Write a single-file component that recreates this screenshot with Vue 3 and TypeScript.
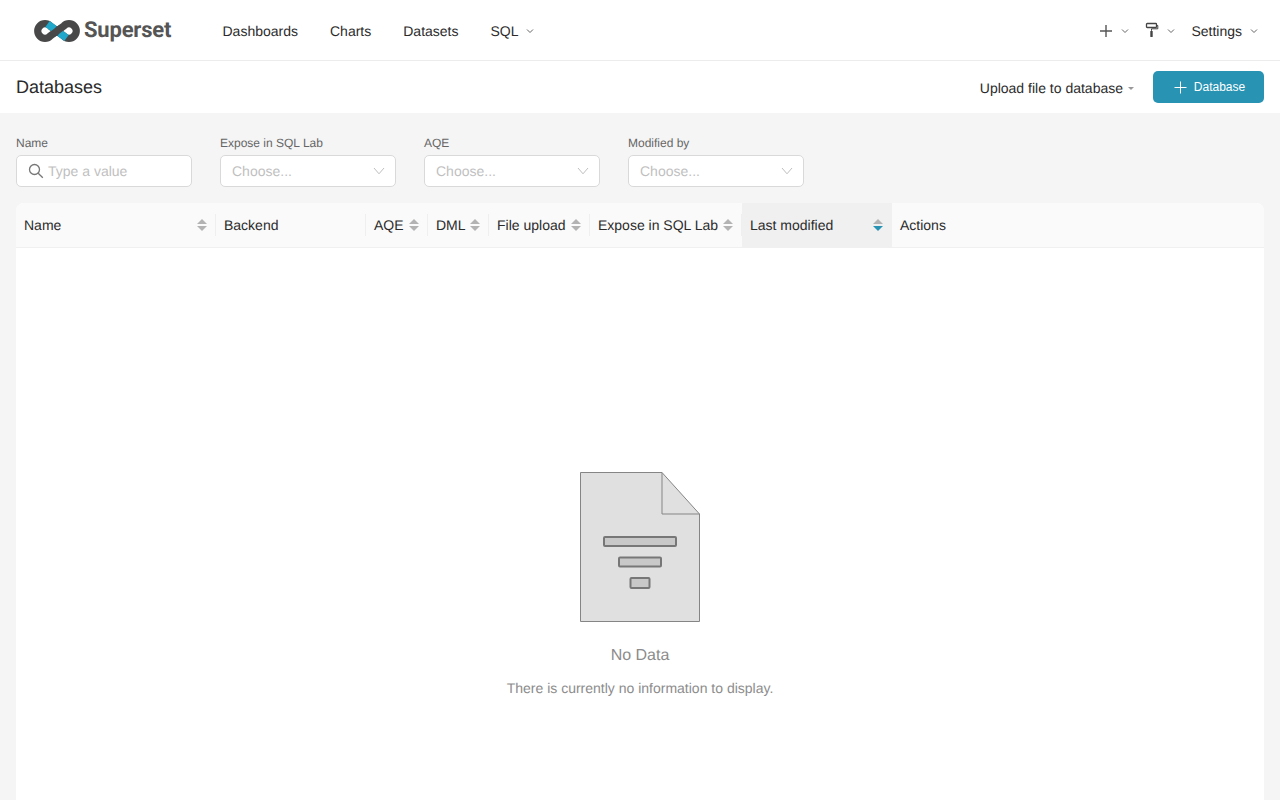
<script setup lang="ts">
const navItems = [
  { label: "Dashboards", caret: false },
  { label: "Charts", caret: false },
  { label: "Datasets", caret: false },
  { label: "SQL", caret: true },
];

const filters = [
  { label: "Name", placeholder: "Type a value", search: true },
  { label: "Expose in SQL Lab", placeholder: "Choose...", search: false },
  { label: "AQE", placeholder: "Choose...", search: false },
  { label: "Modified by", placeholder: "Choose...", search: false },
];

const columns = [
  { label: "Name", sortable: true, active: false },
  { label: "Backend", sortable: false, active: false },
  { label: "AQE", sortable: true, active: false },
  { label: "DML", sortable: true, active: false },
  { label: "File upload", sortable: true, active: false },
  { label: "Expose in SQL Lab", sortable: true, active: false },
  { label: "Last modified", sortable: true, active: true },
  { label: "Actions", sortable: false, active: false },
];
</script>

<template>
  <div class="page">
    <header class="nav">
      <a class="logo">
        <svg width="50" height="24" viewBox="0 0 50 24">
          <path
            d="M18.100 6.900A7.200 7.200 0 1 0 18.100 17.100L31.900 6.900A7.200 7.200 0 1 1 31.900 17.100L18.100 6.900"
            fill="none"
            stroke="#484848"
            stroke-width="7.400"
          />
          <path d="M15.500 5L22.500 10.100M27.500 13.900L34.500 19" stroke="#20a7c9" stroke-width="7.400" fill="none" />
          <path d="M20.500 15.300L29.500 8.700" stroke="#484848" stroke-width="7" fill="none" />
        </svg>
        <span class="logo-text">Superset</span>
      </a>
      <nav class="menu">
        <span v-for="item in navItems" :key="item.label" class="menu-item">
          {{ item.label }}
          <svg v-if="item.caret" class="chev" width="8" height="6" viewBox="0 0 8 6">
            <path d="M1 1.500l3 3 3-3" fill="none" stroke="#666" stroke-width="1" />
          </svg>
        </span>
      </nav>
      <div class="nav-right">
        <span class="nav-icon">
          <svg width="14" height="14" viewBox="0 0 14 14">
            <path d="M7 1v12M1 7h12" stroke="#555" stroke-width="1.400" fill="none" />
          </svg>
          <svg class="chev" width="8" height="6" viewBox="0 0 8 6">
            <path d="M1 1.500l3 3 3-3" fill="none" stroke="#666" stroke-width="1" />
          </svg>
        </span>
        <span class="nav-icon">
          <svg class="roller" width="14" height="16" viewBox="0 0 14 16">
            <rect x="1.500" y="1.500" width="10" height="4" rx="0.800" fill="none" stroke="#444" stroke-width="1.300" />
            <path d="M11.500 3.500h1.300v3.300H6.500v2" fill="none" stroke="#444" stroke-width="1" />
            <rect x="5.300" y="9" width="2.400" height="6" rx="0.600" fill="#444" />
          </svg>
          <svg class="chev" width="8" height="6" viewBox="0 0 8 6">
            <path d="M1 1.500l3 3 3-3" fill="none" stroke="#666" stroke-width="1" />
          </svg>
        </span>
        <span class="settings">
          Settings
          <svg class="chev" width="8" height="6" viewBox="0 0 8 6">
            <path d="M1 1.500l3 3 3-3" fill="none" stroke="#666" stroke-width="1" />
          </svg>
        </span>
      </div>
    </header>

    <section class="subheader">
      <h1 class="title">Databases</h1>
      <div class="actions">
        <span class="upload">
          Upload file to database
          <span class="upload-caret"></span>
        </span>
        <button class="primary">
          <svg width="13" height="13" viewBox="0 0 13 13">
            <path d="M6.500 0.500v12M0.500 6.500h12" stroke="#fff" stroke-width="1" fill="none" />
          </svg>
          Database
        </button>
      </div>
    </section>

    <main class="content">
      <div class="filters">
        <div v-for="f in filters" :key="f.label" class="filter">
          <label class="filter-label">{{ f.label }}</label>
          <div class="input">
            <svg v-if="f.search" class="search" width="16" height="16" viewBox="0 0 16 16">
              <circle cx="6.500" cy="6.500" r="5" fill="none" stroke="#777" stroke-width="1.300" />
              <path d="M10.200 10.200l4.600 4.600" stroke="#777" stroke-width="1.300" fill="none" />
            </svg>
            <span class="placeholder">{{ f.placeholder }}</span>
            <svg v-if="!f.search" class="select-arrow" width="12" height="8" viewBox="0 0 12 8">
              <path d="M1 1l5 5.800L11 1" fill="none" stroke="#bfbfbf" stroke-width="1" />
            </svg>
          </div>
        </div>
      </div>

      <div class="table">
        <div class="thead">
          <div v-for="c in columns" :key="c.label" class="th" :class="{ active: c.active }">
            <span>{{ c.label }}</span>
            <span v-if="c.sortable" class="sorter">
              <i class="up"></i>
              <i class="down" :class="{ on: c.active }"></i>
            </span>
          </div>
        </div>
        <div class="tbody">
          <svg width="120" height="150" viewBox="0 0 120 150">
            <path d="M0.500 0.500H82L119.500 42V149.500H0.500z" fill="#e0e0e0" stroke="#858585" />
            <path d="M82 0.500V42H119.500" fill="none" stroke="#858585" />
            <rect x="24" y="65" width="72" height="9" rx="1" fill="#c8c8c8" stroke="#777" stroke-width="2" />
            <rect x="39" y="85.500" width="42" height="9" rx="1" fill="#c8c8c8" stroke="#777" stroke-width="2" />
            <rect x="50.500" y="106" width="19" height="10" rx="1" fill="#c8c8c8" stroke="#777" stroke-width="2" />
          </svg>
          <div class="empty-title">No Data</div>
          <div class="empty-desc">There is currently no information to display.</div>
        </div>
      </div>
    </main>
  </div>
</template>

<style>
html,
body {
  margin: 0;
  background: #f5f5f5;
}
</style>

<style scoped>
.page {
  height: 800px;
  overflow: hidden;
  background: #f5f5f5;
  font-family: "Liberation Sans", Arial, sans-serif;
  font-size: 14px;
  color: #2b2b2b;
  text-rendering: geometricPrecision;
}

.nav {
  display: flex;
  align-items: center;
  height: 58px;
  background: #fff;
  border-bottom: 1px solid #ececec;
  padding-right: 22px;
  padding-top: 2px;
}
.logo {
  display: flex;
  align-items: center;
  width: 222.500px;
  padding-left: 32px;
  box-sizing: border-box;
  margin-top: -1px;
}
.logo-text {
  font-family: Roboto, sans-serif;
  font-weight: 700;
  font-size: 22px;
  letter-spacing: -0.2px;
  color: #555;
  margin-left: 2px;
}
.menu {
  display: flex;
  gap: 32px;
}
.menu-item {
  display: flex;
  align-items: center;
  gap: 7px;
  line-height: 20px;
}
.nav-right {
  display: flex;
  align-items: center;
  margin-left: auto;
  gap: 16px;
}
.nav-icon {
  display: flex;
  align-items: center;
  gap: 8px;
}
.roller {
  margin-top: -2px;
}
.settings {
  display: flex;
  align-items: center;
  gap: 8px;
}

.subheader {
  display: flex;
  align-items: center;
  justify-content: space-between;
  height: 52px;
  background: #fff;
  padding: 0 16px;
}
.title {
  margin: 0;
  font-size: 18px;
  font-weight: 400;
  line-height: 52px;
}
.actions {
  display: flex;
  align-items: center;
  gap: 19px;
}
.upload {
  display: flex;
  align-items: center;
  gap: 5px;
  padding-top: 2px;
}
.upload-caret {
  width: 0;
  height: 0;
  border-left: 3px solid transparent;
  border-right: 3px solid transparent;
  border-top: 3px solid #999;
}
.primary {
  display: flex;
  align-items: center;
  justify-content: center;
  gap: 7px;
  width: 111px;
  height: 32px;
  padding: 0 0 0 2px;
  border: 0;
  border-radius: 5px;
  background: #2893b3;
  color: #fff;
  font-family: inherit;
  font-size: 12px;
}

.content {
  padding: 0 16px;
}
.filters {
  display: flex;
  gap: 28px;
  padding-top: 20px;
}
.filter {
  width: 176px;
}
.filter-label {
  display: block;
  font-size: 12px;
  line-height: 20px;
  margin-bottom: 2px;
  color: #666;
}
.input {
  display: flex;
  align-items: center;
  justify-content: space-between;
  box-sizing: border-box;
  height: 32px;
  padding: 0 11px;
  background: #fff;
  border: 1px solid #d9d9d9;
  border-radius: 5px;
}
.search {
  flex: none;
  margin-right: 4px;
}
.placeholder {
  flex: 1;
  color: #bfbfbf;
}
.select-arrow {
  flex: none;
  margin-right: -1px;
}

.table {
  margin-top: 16px;
  border-radius: 8px 8px 0 0;
  overflow: hidden;
  background: #fff;
}
.thead {
  display: grid;
  grid-template-columns: 200px 150px 62px 61px 101px 152px 150px 1fr;
  height: 45px;
  background: #fafafa;
  border-bottom: 1px solid #f0f0f0;
  box-sizing: border-box;
}
.th {
  position: relative;
  display: flex;
  align-items: center;
  justify-content: space-between;
  padding: 0 8px;
}
.th:not(:last-child):not(.active)::after {
  content: "";
  position: absolute;
  right: 0;
  top: 11px;
  height: 22px;
  width: 1px;
  background: #efefef;
}
.th.active {
  background: #f0f0f0;
}
.sorter {
  display: flex;
  flex-direction: column;
  gap: 2px;
  margin-left: 4px;
  margin-right: 1px;
}
.sorter i {
  display: block;
  width: 0;
  height: 0;
  border-left: 5px solid transparent;
  border-right: 5px solid transparent;
}
.sorter .up {
  border-bottom: 5px solid #b3b3b3;
}
.sorter .down {
  border-top: 5px solid #b3b3b3;
}
.sorter .down.on {
  border-top-color: #2893b3;
}

.tbody {
  display: flex;
  flex-direction: column;
  align-items: center;
  height: 600px;
  padding-top: 224px;
  box-sizing: border-box;
}
.empty-title {
  margin-top: 24px;
  font-size: 16px;
  line-height: 20px;
  color: #8c8c8c;
}
.empty-desc {
  margin-top: 12px;
  line-height: 20px;
  color: #8c8c8c;
}
</style>
